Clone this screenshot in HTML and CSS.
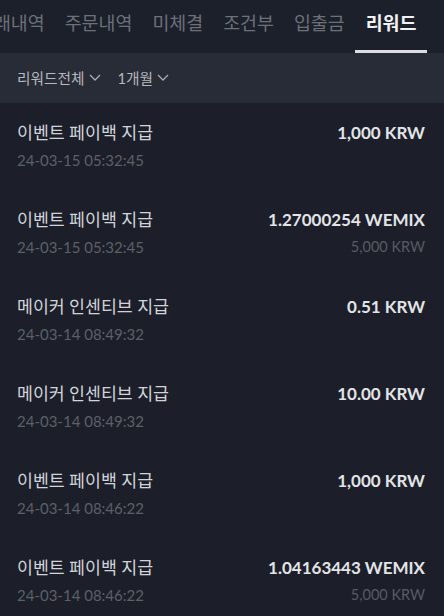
FILE: index.html
```html
<!DOCTYPE html>
<html lang="ko">
<head>
<meta charset="utf-8">
<link rel="stylesheet" href="styles.css">
</head>
<body>
<div class="app">
  <nav class="tabs">
    <div class="tabs-track">
      <span class="tab">거래내역</span>
      <span class="tab">주문내역</span>
      <span class="tab">미체결</span>
      <span class="tab">조건부</span>
      <span class="tab">입출금</span>
      <span class="tab active">리워드</span>
    </div>
  </nav>
  <div class="filters">
    <span class="filter">리워드전체<svg class="chev" viewBox="0 0 12 7" width="12" height="7"><path d="M1 1l5 5 5-5" fill="none" stroke="currentColor" stroke-width="1.3"/></svg></span>
    <span class="filter">1개월<svg class="chev" viewBox="0 0 12 7" width="12" height="7"><path d="M1 1l5 5 5-5" fill="none" stroke="currentColor" stroke-width="1.3"/></svg></span>
  </div>
  <ul class="list">
    <li class="row">
      <div class="left"><div class="title">이벤트 페이백 지급</div><div class="date">24-03-15 05:32:45</div></div>
      <div class="right"><div class="amount">1,000 KRW</div></div>
    </li>
    <li class="row">
      <div class="left"><div class="title">이벤트 페이백 지급</div><div class="date">24-03-15 05:32:45</div></div>
      <div class="right"><div class="amount">1.27000254 WEMIX</div><div class="sub">5,000 KRW</div></div>
    </li>
    <li class="row">
      <div class="left"><div class="title">메이커 인센티브 지급</div><div class="date">24-03-14 08:49:32</div></div>
      <div class="right"><div class="amount">0.51 KRW</div></div>
    </li>
    <li class="row">
      <div class="left"><div class="title">메이커 인센티브 지급</div><div class="date">24-03-14 08:49:32</div></div>
      <div class="right"><div class="amount">10.00 KRW</div></div>
    </li>
    <li class="row">
      <div class="left"><div class="title">이벤트 페이백 지급</div><div class="date">24-03-14 08:46:22</div></div>
      <div class="right"><div class="amount">1,000 KRW</div></div>
    </li>
    <li class="row">
      <div class="left"><div class="title">이벤트 페이백 지급</div><div class="date">24-03-14 08:46:22</div></div>
      <div class="right"><div class="amount">1.04163443 WEMIX</div><div class="sub">5,000 KRW</div></div>
    </li>
  </ul>
</div>
</body>
</html>
```

FILE: styles.css
```css
* { box-sizing: border-box; }
html, body { margin: 0; padding: 0; }
body {
  background: #1c1f29;
  font-family: Lato, "Noto Sans CJK KR", sans-serif;
  width: 444px;
  height: 616px;
  overflow: hidden;
}
.app { display: flex; flex-direction: column; }
.tabs {
  height: 53px;
  background: #1c202a;
  overflow: hidden;
}
.tabs-track {
  display: flex;
  margin-left: -33px;
  height: 100%;
}
.tab {
  flex: none;
  padding: 6px 10px 0;
  font-size: 18.4px;
  line-height: 34px;
  color: #6c7079;
  white-space: nowrap;
  border-bottom: 3px solid transparent;
  height: 53px;
}
.tab.active {
  color: #f1f2f4;
  font-weight: 700;
  border-bottom-color: #dcdee2;
  padding: 6px 11px 0;
}
.filters {
  height: 50px;
  background: #282c37;
  display: flex;
  align-items: center;
  gap: 17px;
  padding: 0 17px 1px;
}
.filter {
  display: flex;
  align-items: center;
  gap: 4px;
  font-size: 14.7px;
  color: #b6b9bf;
}
.chev { color: #a8abb2; }
.list { list-style: none; margin: 0; padding: 0; }
.row {
  height: 87px;
  padding: 18px 19px 0 17px;
  display: flex;
  justify-content: space-between;
}
.title {
  font-size: 17.3px;
  line-height: 24px;
  color: #d2d4d9;
}
.date {
  margin-top: 5px;
  font-size: 15px;
  line-height: 20px;
  color: #5c6068;
}
.right { text-align: right; }
.amount {
  font-size: 17px;
  line-height: 24px;
  font-weight: 700;
  color: #e2e4e8;
}
.sub {
  margin-top: 5px;
  font-size: 14.5px;
  line-height: 20px;
  color: #575b63;
}
```
